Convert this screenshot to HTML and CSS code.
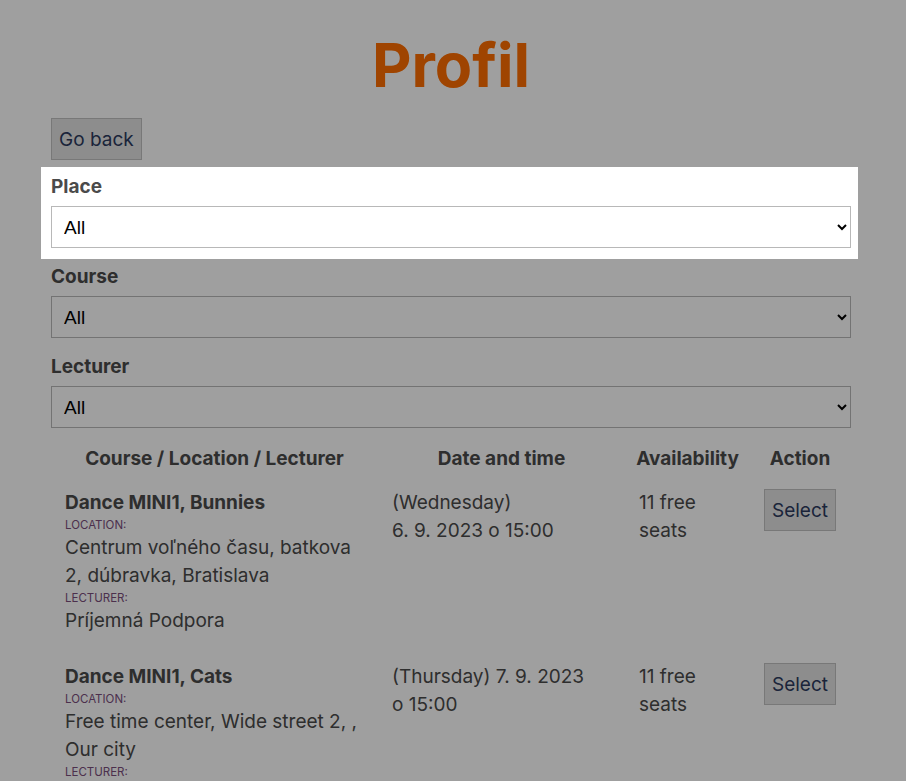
FILE: index.html
```html
<!DOCTYPE html>
<html lang="sk">
<head>
    <meta charset="UTF-8">
    <meta name="viewport" content="width=device-width, initial-scale=1.0">
    <title>Profil</title>
    <link rel="stylesheet" href="styles.css">
</head>
<body>
    <div class="page">
        <h1>Profil</h1>

        <button class="btn">Go back</button>

        <div class="filters">
            <div class="field spotlight">
                <label for="place">Place</label>
                <select id="place">
                    <option>All</option>
                </select>
            </div>
            <div class="field">
                <label for="course">Course</label>
                <select id="course">
                    <option>All</option>
                </select>
            </div>
            <div class="field">
                <label for="lecturer">Lecturer</label>
                <select id="lecturer">
                    <option>All</option>
                </select>
            </div>
        </div>

        <table class="lessons">
            <colgroup>
                <col class="col-course">
                <col class="col-date">
                <col class="col-free">
                <col class="col-action">
            </colgroup>
            <thead>
                <tr>
                    <th>Course / Location / Lecturer</th>
                    <th>Date and time</th>
                    <th>Availability</th>
                    <th>Action</th>
                </tr>
            </thead>
            <tbody>
                <tr>
                    <td>
                        <div class="course-name">Dance MINI1, Bunnies</div>
                        <div class="meta">Location:</div>
                        <div>Centrum voľného času, batkova 2, dúbravka, Bratislava</div>
                        <div class="meta">Lecturer:</div>
                        <div>Príjemná Podpora</div>
                    </td>
                    <td>(Wednesday) 6.&nbsp;9.&nbsp;2023 o 15:00</td>
                    <td>11 free seats</td>
                    <td><button class="btn">Select</button></td>
                </tr>
                <tr>
                    <td>
                        <div class="course-name">Dance MINI1, Cats</div>
                        <div class="meta">Location:</div>
                        <div>Free time center, Wide street 2, , Our city</div>
                        <div class="meta">Lecturer:</div>
                        <div>Príjemná Podpora</div>
                    </td>
                    <td>(Thursday) 7.&nbsp;9.&nbsp;2023 o 15:00</td>
                    <td>11 free seats</td>
                    <td><button class="btn">Select</button></td>
                </tr>
            </tbody>
        </table>
    </div>
</body>
</html>
```

FILE: styles.css
```css
html, body {
    height: 781px;
    overflow: hidden;
}
body {
    margin: 0;
    padding-right: 4px;
    background: #fff;
    color: #4a4a4a;
    font-family: Inter, 'Noto Sans', sans-serif;
    font-size: 19px;
    line-height: 28px;
}
.page {
    width: 800px;
    margin: 0 auto;
}
h1 {
    margin: 25px 0 13px;
    text-align: center;
    font-size: 61px;
    line-height: 80px;
    font-weight: 700;
    color: #ff6e00;
}
.btn {
    display: block;
    height: 42px;
    padding: 1px 7px 0;
    background: #e3e3e3;
    border: 1px solid #c0c0c0;
    color: #2c3a5e;
    font-family: inherit;
    font-size: 19px;
    line-height: 28px;
    cursor: pointer;
}
.filters {
    display: flex;
    flex-direction: column;
    gap: 16px;
    margin-top: 14px;
}
.field {
    display: flex;
    flex-direction: column;
    gap: 7px;
}
.field label {
    padding-top: 1px;
    font-weight: 700;
    line-height: 24px;
}
.field select {
    height: 42px;
    padding: 1px 8px 0;
    background: #fff;
    border: 1px solid #b8b8b8;
    border-radius: 0;
    color: #000;
    font-family: 'Liberation Sans', Arial, sans-serif;
    font-size: 19px;
}
/* highlighted step of the guide, the rest of the page is dimmed */
.spotlight {
    position: relative;
    z-index: 5;
    margin: -7px -7px -11px -10px;
    padding: 7px 7px 11px 10px;
    background: #fff;
    box-shadow: 0 0 0 3000px rgba(0, 0, 0, 0.376);
}
.lessons {
    width: 785px;
    margin: 17px 0 0 7px;
    border-collapse: collapse;
    table-layout: fixed;
}
.col-course { width: 327px; }
.col-date { width: 247px; }
.col-free { width: 125px; }
.col-action { width: 86px; }
.lessons th {
    padding: 0 14px 0 0;
    font-weight: 700;
    text-align: center;
    line-height: 28px;
}
.lessons th:last-child {
    padding-right: 0;
}
.lessons td {
    padding: 16px 20px 12px 7px;
    vertical-align: top;
    text-align: left;
}
.lessons td:nth-child(2) {
    padding-right: 40px;
}
.lessons td:last-child {
    padding-right: 7px;
}
.course-name {
    font-weight: 700;
}
.meta {
    font-size: 11.5px;
    line-height: 17px;
    text-transform: uppercase;
    color: #7a4e7c;
}
```
